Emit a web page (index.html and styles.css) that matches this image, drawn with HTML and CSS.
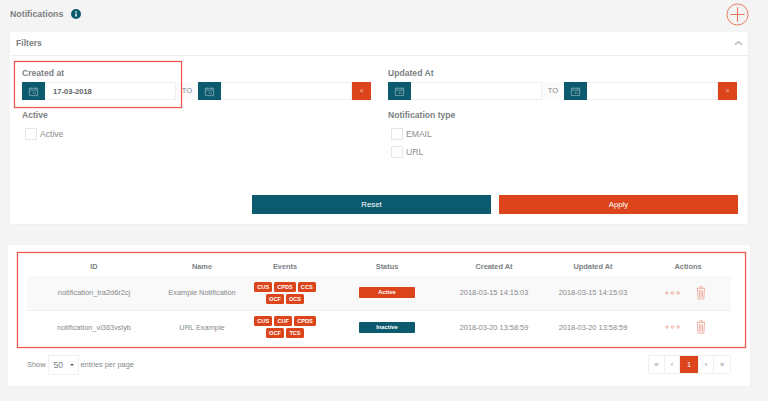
FILE: index.html
```html
<!DOCTYPE html>
<html lang="en">

<head>
  <meta charset="UTF-8">
  <title>Notifications</title>
  <link rel="stylesheet" href="styles.css">
</head>

<body>
  <svg class="sprites" width="0" height="0">
    <symbol id="cal" viewBox="0 0 12 12">
      <path d="M1.5 2.5h9v8h-9zM1.5 4.5h9M3.5 1.5v2M8.5 1.5v2" fill="none" stroke="currentColor" stroke-width=".8" />
      <path d="M5 6.5h1v2.5M7 6.5h1v2.5" fill="none" stroke="currentColor" stroke-width=".6" />
    </symbol>
    <symbol id="trash" viewBox="0 0 10 15">
      <path d="M.5 2.5h9M3.5 2.3V.8h3v1.5M1.3 2.7l.6 11.3h6.2l.6-11.3M3.4 4.5v7.8M5 4.5v7.8M6.6 4.5v7.8" fill="none" stroke="currentColor" stroke-width=".9" />
    </symbol>
    <symbol id="dots" viewBox="0 0 16 4">
      <circle cx="2" cy="2" r="1.3" fill="none" stroke="currentColor" />
      <circle cx="8" cy="2" r="1.3" fill="none" stroke="currentColor" />
      <circle cx="14" cy="2" r="1.3" fill="none" stroke="currentColor" />
    </symbol>
  </svg>

  <div class="pageHead">
    <div class="pageTitle">
      <h1>Notifications</h1>
      <svg class="infoIcon" viewBox="0 0 10 10">
        <circle cx="5" cy="5" r="5" fill="#0c5a6e" />
        <path d="M5 2.2v1.2M5 4.4v3.2" stroke="#fff" stroke-width="1.5" />
      </svg>
    </div>
    <svg class="addIcon" viewBox="0 0 24 24">
      <circle cx="12" cy="12" r="11" fill="none" stroke="#e4775a" />
      <path d="M12 4.5v15M4.5 12h15" stroke="#e4775a" stroke-width="1.1" />
    </svg>
  </div>

  <section class="filtersCard">
    <div class="highlight highlightDate"></div>
    <header class="filtersHead">
      <h2>Filters</h2>
      <svg class="chevron" viewBox="0 0 10 6">
        <path d="M1 5l4-3.5L9 5" fill="none" stroke="#b4b7b9" stroke-width="1.6" />
      </svg>
    </header>
    <form class="filtersForm">
      <div class="field">
        <label class="fieldLabel">Created at</label>
        <div class="dateRange">
          <span class="calBtn"><svg class="calIcon"><use href="#cal" /></svg></span>
          <input class="dateInput" type="text" value="17-03-2018">
          <span class="toLabel">TO</span>
          <span class="calBtn"><svg class="calIcon"><use href="#cal" /></svg></span>
          <input class="dateInput" type="text">
          <span class="clearBtn">×</span>
        </div>
      </div>
      <div class="field">
        <label class="fieldLabel">Updated At</label>
        <div class="dateRange">
          <span class="calBtn"><svg class="calIcon"><use href="#cal" /></svg></span>
          <input class="dateInput" type="text">
          <span class="toLabel">TO</span>
          <span class="calBtn"><svg class="calIcon"><use href="#cal" /></svg></span>
          <input class="dateInput" type="text">
          <span class="clearBtn">×</span>
        </div>
      </div>
      <div class="field">
        <label class="fieldLabel">Active</label>
        <label class="checkRow"><input type="checkbox">Active</label>
      </div>
      <div class="field">
        <label class="fieldLabel">Notification type</label>
        <label class="checkRow"><input type="checkbox">EMAIL</label>
        <label class="checkRow"><input type="checkbox">URL</label>
      </div>
      <div class="formButtons">
        <button class="btn btnReset" type="button">Reset</button>
        <button class="btn btnApply" type="button">Apply</button>
      </div>
    </form>
  </section>

  <section class="tableCard">
    <div class="highlight highlightTable"></div>
    <table class="notifTable">
      <colgroup>
        <col class="colId">
        <col class="colName">
        <col class="colEvents">
        <col class="colStatus">
        <col class="colCreated">
        <col class="colUpdated">
        <col class="colActions">
      </colgroup>
      <thead>
        <tr>
          <th>ID</th>
          <th>Name</th>
          <th>Events</th>
          <th>Status</th>
          <th>Created At</th>
          <th>Updated At</th>
          <th>Actions</th>
        </tr>
      </thead>
      <tbody>
        <tr class="rowOdd">
          <td>notification_tra2d6r2cj</td>
          <td>Example Notification</td>
          <td>
            <div class="eventList">
              <span class="eventTag">CUS</span><span class="eventTag">CPDS</span><span class="eventTag">CCS</span>
              <span class="eventTag">OCF</span><span class="eventTag">OCS</span>
            </div>
          </td>
          <td><span class="status statusActive">Active</span></td>
          <td>2018-03-15 14:15:03</td>
          <td>2018-03-15 14:15:03</td>
          <td>
            <div class="actions">
              <svg class="dotsIcon"><use href="#dots" /></svg>
              <svg class="trashIcon"><use href="#trash" /></svg>
            </div>
          </td>
        </tr>
        <tr>
          <td>notification_vi363vslyb</td>
          <td>URL Example</td>
          <td>
            <div class="eventList">
              <span class="eventTag">CUS</span><span class="eventTag">CUF</span><span class="eventTag">CPDS</span>
              <span class="eventTag">OCF</span><span class="eventTag">TCS</span>
            </div>
          </td>
          <td><span class="status statusInactive">Inactive</span></td>
          <td>2018-03-20 13:58:59</td>
          <td>2018-03-20 13:58:59</td>
          <td>
            <div class="actions">
              <svg class="dotsIcon"><use href="#dots" /></svg>
              <svg class="trashIcon"><use href="#trash" /></svg>
            </div>
          </td>
        </tr>
      </tbody>
    </table>

    <div class="tableFooter">
      <div class="pageSize">
        <span>Show</span>
        <span class="sizeSelect">50<i class="caret"></i></span>
        <span>entries per page</span>
      </div>
      <ul class="pager">
        <li>«</li>
        <li>‹</li>
        <li class="current">1</li>
        <li>›</li>
        <li>»</li>
      </ul>
    </div>
  </section>
</body>

</html>
```

FILE: styles.css
```css
* {
  box-sizing: border-box;
}

body {
  margin: 0;
  background-color: #f4f4f4;
  color: #85888b;
  font-family: "Liberation Sans", Arial, sans-serif;
  font-size: 7.4px;
}

.sprites {
  position: absolute;
}

.pageHead {
  display: flex;
  justify-content: space-between;
  align-items: flex-start;
  height: 32px;
  padding: 3px 19px 0 10px;
}

.pageTitle {
  display: flex;
  align-items: center;
  gap: 8px;
  height: 22px;
}

.pageTitle h1 {
  margin: 0;
  font-size: 8.8px;
  color: #7b7f83;
}

.infoIcon {
  width: 10px;
  height: 10px;
}

.addIcon {
  width: 23px;
  height: 23px;
}

.filtersCard {
  position: relative;
  height: 193px;
  margin: 0 19px 20px 10px;
  background-color: #fff;
  border: 1px solid #efefef;
  border-width: 0 1px 1px 0;
}

.filtersHead {
  display: flex;
  justify-content: space-between;
  align-items: center;
  height: 24px;
  padding: 0 5px 2px 6px;
  border-bottom: 1px solid #eeeeee;
}

.filtersHead h2 {
  margin: 0;
  font-size: 8.6px;
  color: #7b7f83;
}

.chevron {
  width: 9px;
  height: 6px;
}

.highlight {
  position: absolute;
  border: 1px solid #f4554f;
  box-shadow: 0 0 1px #f4615c, inset 0 0 1px #f4615c;
  pointer-events: none;
}

.highlightDate {
  left: 4px;
  top: 29px;
  width: 168px;
  height: 47px;
}

.highlightTable {
  left: 9px;
  top: 7px;
  width: 729px;
  height: 96px;
}

.filtersForm {
  display: grid;
  grid-template-columns: 349px 349px;
  column-gap: 17px;
  padding: 11px 11px 0 12px;
}

.field {
  min-width: 0;
}

.field:nth-child(n+3) {
  margin-top: 9px;
}

.fieldLabel {
  display: block;
  height: 12px;
  margin-bottom: 3px;
  font-size: 8.6px;
  line-height: 12px;
  font-weight: bold;
  color: #7b7f83;
}

.dateRange {
  display: flex;
  height: 18px;
}

.calBtn {
  display: flex;
  flex: none;
  justify-content: center;
  align-items: center;
  width: 23px;
  background-color: #0c5a6e;
  color: #8db0ba;
}

.calIcon {
  width: 11px;
  height: 11px;
}

.dateInput {
  flex: 1;
  min-width: 0;
  height: 18px;
  padding: 0 0 0 8px;
  border: 1px solid #f0f0f0;
  border-left: none;
  font-family: inherit;
  font-size: 7.6px;
  font-weight: bold;
  color: #5f6366;
}

.toLabel {
  flex: none;
  width: 22px;
  font-size: 7.6px;
  line-height: 18px;
  text-align: center;
  color: #85888b;
  background-color: #fbfbfb;
}

.clearBtn {
  flex: none;
  width: 19px;
  background-color: #dc451b;
  font-size: 8px;
  line-height: 18px;
  text-align: center;
  color: #f1b49f;
}

.checkRow {
  display: flex;
  align-items: center;
  gap: 3px;
  height: 12px;
  margin: 6px 0 0 3px;
  font-size: 8.6px;
  color: #8b8e91;
}

.fieldLabel + .checkRow {
  margin-top: 7px;
}

.checkRow input {
  appearance: none;
  width: 12px;
  height: 12px;
  margin: 0;
  background-color: #fff;
  border: 1px solid #e6e6e6;
}

.formButtons {
  grid-column: 1 / -1;
  display: flex;
  gap: 8px;
  margin: 37px 0 0 230px;
}

.btn {
  flex: none;
  width: 239px;
  height: 19px;
  padding: 0;
  border: none;
  font-family: inherit;
  font-size: 7.8px;
  color: #fff;
}

.btnReset {
  background-color: #0c5a6e;
}

.btnApply {
  background-color: #dc451b;
}

.tableCard {
  position: relative;
  height: 142px;
  margin: 0 17px 0 8px;
  padding: 11px 19px 0;
  background-color: #fff;
  border: 1px solid #f0f0f0;
  border-width: 0 1px 1px 0;
}

.notifTable {
  width: 704px;
  table-layout: fixed;
  border-collapse: collapse;
  text-align: center;
}

.colId {
  width: 134px;
}

.colName {
  width: 82px;
}

.colEvents {
  width: 84px;
}

.colStatus {
  width: 120px;
}

.colCreated {
  width: 94px;
}

.colUpdated {
  width: 104px;
}

.colActions {
  width: 86px;
}

.notifTable th {
  height: 20px;
  padding: 0;
  font-size: 7.4px;
  color: #7b7f83;
}

.notifTable td {
  height: 34px;
  padding: 0;
  border-bottom: 1px solid transparent;
}

.rowOdd td {
  background-color: #f9f9f9;
  border-bottom-color: #eeeeee;
}

.eventList {
  display: flex;
  flex-wrap: wrap;
  justify-content: center;
  gap: 2px;
  width: 70px;
  margin: 0 auto;
}

.eventTag {
  min-width: 18px;
  height: 10px;
  padding: 0 3px;
  background-color: #dc451b;
  border-radius: 1.5px;
  font-size: 5.6px;
  font-weight: bold;
  line-height: 10px;
  color: #fff;
}

.status {
  display: block;
  width: 56px;
  height: 11px;
  margin: 0 auto;
  border-radius: 1px;
  font-size: 5.8px;
  font-weight: bold;
  line-height: 11px;
  color: #fff;
}

.statusActive {
  background-color: #dc451b;
}

.statusInactive {
  background-color: #0c5a6e;
}

.actions {
  display: flex;
  align-items: center;
  justify-content: center;
  gap: 16px;
  padding-right: 6px;
  color: #eda797;
}

.dotsIcon {
  width: 15px;
  height: 4px;
}

.trashIcon {
  width: 10px;
  height: 14px;
}

.tableFooter {
  display: flex;
  justify-content: space-between;
  margin-top: 10px;
}

.pageSize {
  display: flex;
  align-items: center;
  gap: 2px;
}

.sizeSelect {
  display: flex;
  justify-content: space-between;
  align-items: center;
  width: 31px;
  height: 20px;
  padding: 0 4px 0 5px;
  border: 1px solid #f0f0f0;
  font-size: 8.6px;
  color: #7b7f83;
}

.caret {
  border: 2px solid transparent;
  border-top: 2.5px solid #555;
  border-bottom: none;
}

.pager {
  display: flex;
  height: 19px;
  margin: 0;
  padding: 0;
  list-style: none;
  border: 1px solid #f0f0f0;
  border-radius: 2px;
}

.pager li {
  width: 15px;
  border-right: 1px solid #f0f0f0;
  line-height: 17px;
  text-align: center;
}

.pager li:first-child,
.pager li:last-child {
  width: 16px;
}

.pager li:last-child {
  border-right: none;
}

.pager .current {
  width: 19px;
  background-color: #dc451b;
  color: #fff;
}
```
